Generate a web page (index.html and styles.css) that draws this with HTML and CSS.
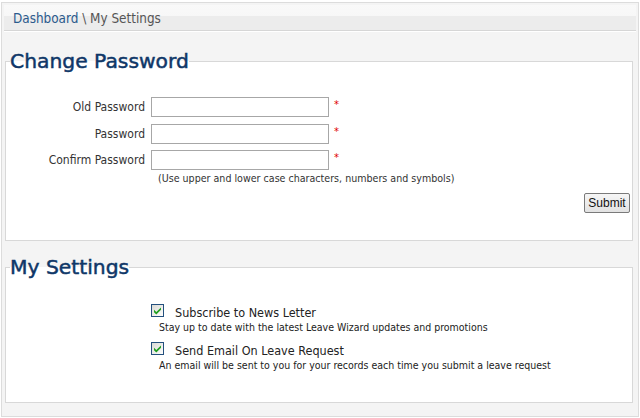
FILE: index.html
```html
<!DOCTYPE html>
<html>
<head>
<meta charset="utf-8">
<link rel="stylesheet" href="styles.css">
</head>
<body>
<div class="page">
  <div class="crumbs"><a class="crumb-link" href="#">Dashboard</a> \ My Settings</div>

  <fieldset class="box box-pw">
    <legend class="box-title">Change Password</legend>
    <div class="form-grid">
      <label class="lbl">Old Password</label><input class="txt" type="password"><span class="req">*</span>
      <label class="lbl">Password</label><input class="txt" type="password"><span class="req">*</span>
      <label class="lbl">Confirm Password</label><input class="txt" type="password"><span class="req">*</span>
    </div>
    <div class="hint">(Use upper and lower case characters, numbers and symbols)</div>
    <div class="actions"><button class="btn" type="button">Submit</button></div>
  </fieldset>

  <fieldset class="box box-settings">
    <legend class="box-title">My Settings</legend>
    <div class="opt">
      <div class="opt-row">
        <span class="chk"><svg width="13" height="13" viewBox="0 0 13 13"><defs><linearGradient id="g1" x1="0" y1="0" x2="1" y2="1"><stop offset="0" stop-color="#d8d8d2"/><stop offset="1" stop-color="#ffffff"/></linearGradient></defs><rect x="0.5" y="0.5" width="12" height="12" fill="url(#g1)" stroke="#24507e"/><path d="M3 5.8 L5.3 8.1 L10 3.4 L10 5.8 L5.3 10.5 L3 8.2 Z" fill="#1f9e1f"/></svg></span>
        <span class="opt-title">Subscribe to News Letter</span>
      </div>
      <div class="opt-desc">Stay up to date with the latest Leave Wizard updates and promotions</div>
    </div>
    <div class="opt">
      <div class="opt-row">
        <span class="chk"><svg width="13" height="13" viewBox="0 0 13 13"><defs><linearGradient id="g2" x1="0" y1="0" x2="1" y2="1"><stop offset="0" stop-color="#d8d8d2"/><stop offset="1" stop-color="#ffffff"/></linearGradient></defs><rect x="0.5" y="0.5" width="12" height="12" fill="url(#g2)" stroke="#24507e"/><path d="M3 5.8 L5.3 8.1 L10 3.4 L10 5.8 L5.3 10.5 L3 8.2 Z" fill="#1f9e1f"/></svg></span>
        <span class="opt-title">Send Email On Leave Request</span>
      </div>
      <div class="opt-desc">An email will be sent to you for your records each time you submit a leave request</div>
    </div>
  </fieldset>
</div>
</body>
</html>
```

FILE: styles.css
```css
html, body {
  margin: 0;
  padding: 0;
  background: #ffffff;
}

body {
  font-family: "DejaVu Sans Condensed", "DejaVu Sans", sans-serif;
  font-stretch: condensed;
  color: #222;
}

.page {
  margin: 2px 1px 0 1px;
  height: 415px;
  box-sizing: border-box;
  border: 1px solid #dcdcdc;
  background: #f4f4f4;
  padding: 2px 2px 0 2px;
}

.crumbs {
  height: 26px;
  line-height: 26px;
  padding: 1px 0 0 9px;
  box-sizing: border-box;
  font-size: 13.4px;
  color: #555;
  background: linear-gradient(#f9f9f9 0, #f7f7f7 45%, #ececec 46%, #ececec 100%);
  border-bottom: 1px solid #d6d6d6;
  box-shadow: 0 1px 0 #ffffff;
}

.crumb-link {
  color: #2b5a8c;
  text-decoration: none;
}

.box {
  margin: 0 3px 0 1px;
  padding: 0 2px 0 10px;
  border: 1px solid #d8d8d8;
  background: #ffffff;
  min-width: 0;
  box-sizing: border-box;
}

.box-pw {
  margin-top: 17px;
  height: 193px;
}

.box-settings {
  margin-top: 13px;
  height: 149px;
}

.box-title {
  padding: 0;
  margin-left: -6px;
  font-size: 20.3px;
  line-height: 26px;
  color: #0f3768;
  font-weight: normal;
  font-stretch: normal;
  font-family: "DejaVu Sans", sans-serif;
  -webkit-text-stroke: 0.5px #0f3768;
}

.form-grid {
  margin-top: 23px;
  display: grid;
  grid-template-columns: 129px 178px auto;
  column-gap: 6px;
  row-gap: 6.5px;
  align-items: center;
}

.lbl {
  text-align: right;
  font-size: 12px;
  color: #333;
}

.txt {
  box-sizing: border-box;
  width: 178px;
  height: 20px;
  margin: 0;
  border: 1px solid #a7a7a7;
  background: #fff;
}

.req {
  color: #e00000;
  font-size: 11px;
  align-self: start;
  margin-left: -1px;
  margin-top: 1px;
}

.hint {
  margin: 1px 0 0 142px;
  font-size: 10.6px;
  line-height: 14px;
  color: #333;
}

.actions {
  display: flex;
  justify-content: flex-end;
  margin-top: 8px;
}

.btn {
  width: 46px;
  height: 20px;
  padding: 0;
  font-family: "Liberation Sans", Arial, sans-serif;
  font-size: 12px;
  color: #111;
  border: 1px solid #7a7a7a;
  border-radius: 2px;
  background: linear-gradient(#f6f6f6, #e2e2e2);
}

.opt {
  margin-left: 135px;
}

.opt:first-of-type {
  margin-top: 24px;
}

.opt + .opt {
  margin-top: 8px;
}

.opt-row {
  display: flex;
  align-items: center;
  height: 16px;
}

.chk {
  display: block;
  width: 13px;
  height: 13px;
  margin-top: -3px;
}

.chk svg {
  display: block;
}

.opt-title {
  margin-left: 11px;
  font-size: 12.5px;
  color: #222;
}

.opt-desc {
  margin-left: 8px;
  font-size: 10.5px;
  line-height: 14px;
  color: #222;
}
```
